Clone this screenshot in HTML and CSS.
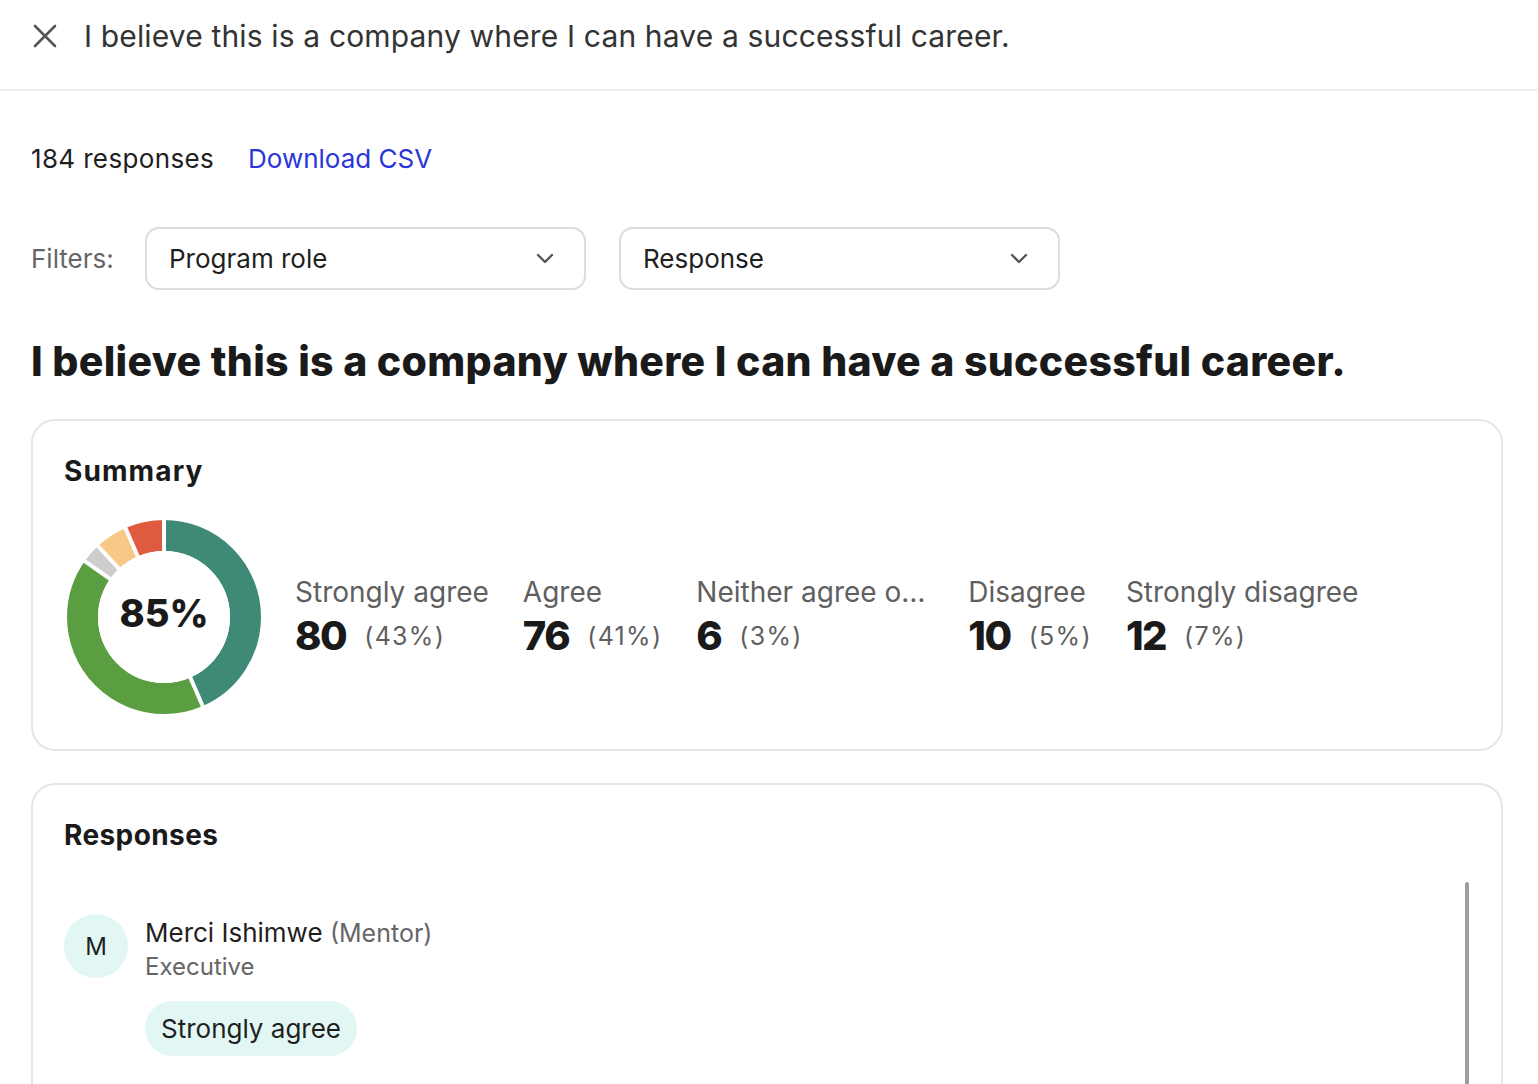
FILE: index.html
```html
<!DOCTYPE html>
<html lang="en">
<head>
<meta charset="utf-8">
<title>Survey question</title>
<link rel="stylesheet" href="styles.css">
</head>
<body>
<header class="topbar">
  <button class="close" aria-label="Close">
    <svg width="24" height="24" viewBox="0 0 24 24"><path d="M2 2 L22 22 M22 2 L2 22" stroke="#555" stroke-width="2.6" fill="none" stroke-linecap="round"/></svg>
  </button>
  <div class="topbar-title">I believe this is a company where I can have a successful career.</div>
</header>
<main class="main">
  <div class="meta">
    <span class="count">184 responses</span>
    <a class="link" href="#">Download CSV</a>
  </div>
  <div class="filters">
    <span class="filters-label">Filters:</span>
    <div class="select"><span>Program role</span>
      <svg class="chev" width="18" height="12" viewBox="0 0 18 12"><path d="M2 2 L9 9 L16 2" stroke="#555" stroke-width="2.4" fill="none" stroke-linecap="round" stroke-linejoin="round"/></svg>
    </div>
    <div class="select"><span>Response</span>
      <svg class="chev" width="18" height="12" viewBox="0 0 18 12"><path d="M2 2 L9 9 L16 2" stroke="#555" stroke-width="2.4" fill="none" stroke-linecap="round" stroke-linejoin="round"/></svg>
    </div>
  </div>
  <h1 class="heading">I believe this is a company where I can have a successful career.</h1>

  <section class="card summary">
    <h2 class="card-title">Summary</h2>
    <div class="summary-body">
      <div class="donut">
        <svg width="196" height="196" viewBox="0 0 196 196">
          <g transform="rotate(-90 98 98)" fill="none" stroke-width="31">
            <circle cx="98" cy="98" r="81.5" stroke="#3f8a77" stroke-dasharray="222.63 600" stroke-dashoffset="0"/>
            <circle cx="98" cy="98" r="81.5" stroke="#5b9e41" stroke-dasharray="211.5 600" stroke-dashoffset="-222.63"/>
            <circle cx="98" cy="98" r="81.5" stroke="#cdcdcd" stroke-dasharray="16.7 600" stroke-dashoffset="-434.13"/>
            <circle cx="98" cy="98" r="81.5" stroke="#f8c986" stroke-dasharray="27.83 600" stroke-dashoffset="-450.83"/>
            <circle cx="98" cy="98" r="81.5" stroke="#de5b3f" stroke-dasharray="33.42 600" stroke-dashoffset="-478.66"/>
          </g>
          <g stroke="#fff" stroke-width="4">
            <line x1="98" y1="98" x2="98" y2="-4"/>
            <line x1="98" y1="98" x2="137.87" y2="189.71"/>
            <line x1="98" y1="98" x2="16.29" y2="40.36"/>
            <line x1="98" y1="98" x2="29.8" y2="24.86"/>
            <line x1="98" y1="98" x2="58.29" y2="6.22"/>
          </g>
          <circle cx="98" cy="98" r="66" fill="#fff"/>
        </svg>
        <span class="donut-label">85%</span>
      </div>
      <div class="stats">
        <div class="stat">
          <div class="stat-label">Strongly agree</div>
          <div class="stat-value"><span class="num">80</span><span class="pct">(43%)</span></div>
        </div>
        <div class="stat">
          <div class="stat-label">Agree</div>
          <div class="stat-value"><span class="num">76</span><span class="pct">(41%)</span></div>
        </div>
        <div class="stat stat-trunc">
          <div class="stat-label">Neither agree or disagree</div>
          <div class="stat-value"><span class="num">6</span><span class="pct">(3%)</span></div>
        </div>
        <div class="stat">
          <div class="stat-label">Disagree</div>
          <div class="stat-value"><span class="num">10</span><span class="pct">(5%)</span></div>
        </div>
        <div class="stat">
          <div class="stat-label">Strongly disagree</div>
          <div class="stat-value"><span class="num">12</span><span class="pct">(7%)</span></div>
        </div>
      </div>
    </div>
  </section>

  <section class="card responses">
    <h2 class="card-title">Responses</h2>
    <div class="list">
      <div class="list-content">
        <div class="response">
          <div class="avatar">M</div>
          <div class="response-info">
            <div class="name">Merci Ishimwe <span class="role">(Mentor)</span></div>
            <div class="title">Executive</div>
            <span class="chip">Strongly agree</span>
          </div>
        </div>
      </div>
      <div class="scrollbar"></div>
    </div>
  </section>
</main>
</body>
</html>
```

FILE: styles.css
```css
* { box-sizing: border-box; }
html, body { margin: 0; padding: 0; background: #fff; }
body {
  font-family: "Inter", "Liberation Sans", sans-serif;
  color: #1f1f1f;
  overflow: hidden;
}

.topbar {
  height: 91px;
  border-bottom: 2px solid #efefef;
  display: flex;
  align-items: flex-start;
  padding: 17px 0 0 33px;
  gap: 27px;
}
.close {
  border: 0;
  background: none;
  padding: 0;
  width: 24px;
  height: 24px;
  margin-top: 7px;
  display: flex;
}
.topbar-title {
  font-size: 30px;
  line-height: 38px;
  color: #333;
  letter-spacing: 0.15px;
}

.main {
  padding: 0 35px 0 31px;
}

.meta {
  margin-top: 52px;
  display: flex;
  gap: 34px;
  font-size: 26px;
  line-height: 32px;
}
.count { color: #1f1f1f; letter-spacing: 0.35px; }
.link { color: #2b35d9; text-decoration: none; }

.filters {
  margin-top: 52px;
  display: flex;
  align-items: center;
  gap: 33px;
}
.filters-label {
  font-size: 26px;
  color: #666;
  width: 81px;
}
.select {
  width: 441px;
  height: 63px;
  border: 2px solid #dcdcdc;
  border-radius: 14px;
  display: flex;
  align-items: center;
  justify-content: space-between;
  padding: 0 30px 0 22px;
  font-size: 26px;
  color: #1f1f1f;
}

.heading {
  margin: 47px 0 0;
  font-size: 41px;
  line-height: 48px;
  font-weight: 800;
  letter-spacing: 0.3px;
  color: #1a1a1a;
}

.card {
  border: 2px solid #e6e6e6;
  border-radius: 24px;
  padding: 32px 31px 34px;
  margin-top: 34px;
}
.card-title {
  margin: 0;
  font-size: 28px;
  line-height: 36px;
  font-weight: 700;
  letter-spacing: 0.4px;
  color: #1a1a1a;
}
.summary .card-title { letter-spacing: 1.1px; }

.summary-body {
  margin-top: 30px;
  display: flex;
  align-items: center;
  gap: 33px;
}
.donut {
  position: relative;
  width: 196px;
  height: 196px;
  margin-left: 2px;
  flex: none;
}
.donut svg { display: block; }
.donut-label {
  position: absolute;
  inset: 0;
  display: flex;
  align-items: center;
  justify-content: center;
  padding-bottom: 8px;
  font-size: 38px;
  font-weight: 800;
  color: #1a1a1a;
}

.stats {
  display: flex;
  gap: 34px;
}
.stat { display: flex; flex-direction: column; }
.stat-trunc { width: 238px; }
.stat-label {
  font-size: 28px;
  line-height: 34px;
  color: #5f5f5f;
  white-space: nowrap;
  overflow: hidden;
  text-overflow: ellipsis;
}
.stat-value {
  display: flex;
  align-items: center;
  gap: 18px;
  margin-top: 4px;
}
.num {
  font-size: 40px;
  line-height: 46px;
  font-weight: 800;
  letter-spacing: -1.5px;
  color: #1a1a1a;
}
.pct {
  font-size: 25px;
  color: #5f5f5f;
  letter-spacing: 1.3px;
}

.responses {
  margin-top: 32px;
  padding-bottom: 0;
  border-bottom: 0;
  border-bottom-left-radius: 0;
  border-bottom-right-radius: 0;
}
.list {
  margin-top: 29px;
  display: flex;
  height: 400px;
}
.list-content {
  flex: 1;
  padding-top: 32px;
}
.scrollbar {
  width: 4px;
  background: #9e9e9e;
  border-radius: 2px;
  margin-right: 1px;
}
.response {
  display: flex;
  gap: 17px;
}
.avatar {
  width: 64px;
  height: 64px;
  border-radius: 50%;
  background: #e2f7f4;
  display: flex;
  align-items: center;
  justify-content: center;
  font-size: 24px;
  color: #1f1f1f;
  flex: none;
}
.response-info {
  display: flex;
  flex-direction: column;
  align-items: flex-start;
  padding-top: 2px;
}
.name {
  font-size: 26px;
  line-height: 34px;
  color: #1f1f1f;
}
.role { color: #666; font-size: 25px; }
.title {
  font-size: 24px;
  line-height: 34px;
  color: #666;
}
.chip {
  margin-top: 17px;
  height: 55px;
  display: inline-flex;
  align-items: center;
  padding: 0 16px;
  border-radius: 28px;
  background: #e2f7f4;
  font-size: 26px;
  color: #1f1f1f;
}
```
